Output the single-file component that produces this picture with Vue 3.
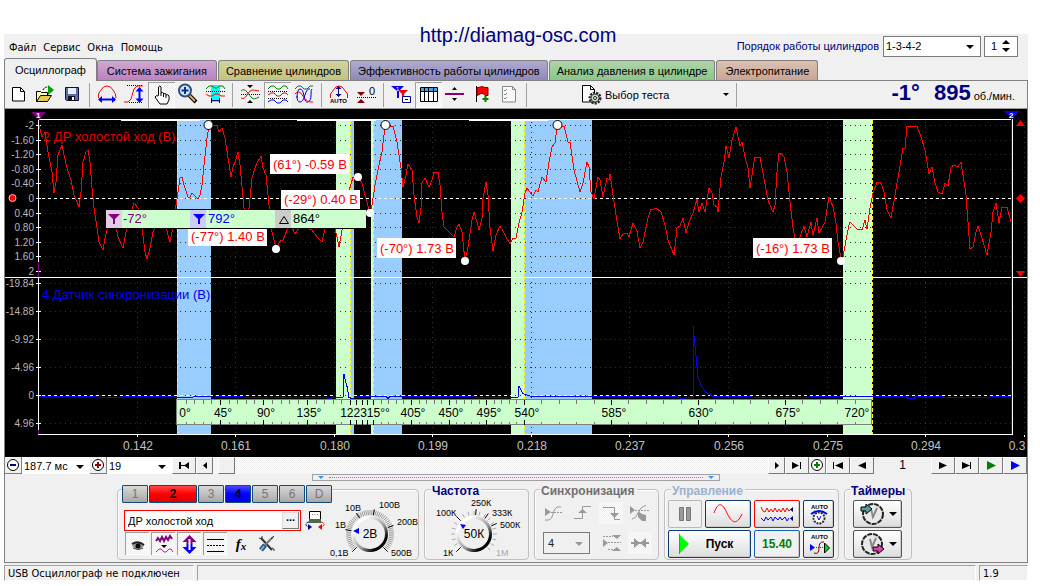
<script setup>
import { ref } from 'vue'

const tabs = [
  { label: 'Осциллограф', tone: 'active' },
  { label: 'Система зажигания', tone: 'violet' },
  { label: 'Сравнение цилиндров', tone: 'olive' },
  { label: 'Эффективность работы цилиндров', tone: 'lavender' },
  { label: 'Анализ давления в цилиндре', tone: 'green' },
  { label: 'Электропитание', tone: 'tan' },
]

/* Toolbar glyphs, drawn on a 27x26 grid */
const tools = [
  [
    { name: 'Новый', svg: '<path d="M7.5 5.500h8l4 4v9.500h-12z" fill="#fff" stroke="#000"/><path d="M15.500 5.500v4h4" fill="none" stroke="#000"/>' },
    { name: 'Открыть', svg: '<path d="M4.500 19.500v-10h4l1 1h6v3" fill="#ffffb0" stroke="#000"/><path d="M4.500 19.500l4-6h11l-4 6z" fill="#e8c850" stroke="#000"/><path d="M16 3l6 5-6 5z" fill="#00a000"/><path d="M11 8q1-3 5-3" stroke="#000" fill="none" stroke-dasharray="2 1"/>' },
    { name: 'Сохранить', svg: '<path d="M6.500 5.500h13v13h-12l-1-1z" fill="#5a6ea8" stroke="#101030"/><path d="M9 6h8v6H9z" fill="#e8eef8"/><path d="M9 14h7v5H9z" fill="#101020"/><path d="M13 15h2v3h-2z" fill="#fff"/>' },
  ],
  [
    { name: 'Период', svg: '<path d="M4.500 16v-4Q6 9 7 8q2-4 6-4 4 0 6 4 3 3 3 8" fill="none" stroke="#f00"/><path d="M5 17.500h16" stroke="#00f" stroke-width="2"/><path d="M4 17.500l4-3.500v7zM22 17.500l-4-3.500v7z" fill="#00f"/>' },
    { name: 'Амплитуда', svg: '<path d="M6 3.500h16M8 20.500h13" stroke="#000" stroke-dasharray="1 1"/><path d="M3 20h4l3-3 3-10 3-3h6" fill="none" stroke="#f00"/><path d="M18.500 8v10" stroke="#00f" stroke-width="2"/><path d="M18.500 5l-4 4.500h8zM18.500 21l-4-4.500h8z" fill="#00f"/>' },
    { name: 'Рука', on: true, svg: '<path d="M10.500 13V5q1.500-2 2.500 0v6q1.500-1 2.500 0v1q1.500-1 2.500 0v1q2-1 3 1v4l-2 4h-7l-5-7q1-2 3-1z" fill="#fff" stroke="#000"/><path d="M13 11v3M15.500 12v3M18 13v3" stroke="#000"/>' },
    { name: 'Лупа', svg: '<path d="M14 13l7 7" stroke="#000" stroke-width="4"/><path d="M14 13l6 6" stroke="#e0b060" stroke-width="2"/><circle cx="10" cy="8.500" r="6" fill="#d8eaff" stroke="#334c80" stroke-width="2"/><path d="M6.500 8.500h7M10 5v7" stroke="#003090" stroke-width="2"/>' },
    { name: 'Выделить', svg: '<path d="M9 3h9v17H9z" fill="#0ff"/><path d="M4 7l3-3h3l3 2h2l3-2h3l2 3" fill="none" stroke="#008000"/><path d="M4 9.500h19" stroke="#000" stroke-dasharray="1 1"/><path d="M4 12l3 2h3l3-2h3l3 2h4" fill="none" stroke="#f00"/><path d="M10 18.500h7M9.500 16v5M17.500 16v5" stroke="#000080"/>' },
  ],
  [
    { name: 'Центр', svg: '<path d="M4 12.500h19" stroke="#000" stroke-dasharray="1 1"/><path d="M4 9q3-3 6 1t5 6 7-1" fill="none" stroke="#008000"/><path d="M4 16q3 2 6-3t5-5 7 1" fill="none" stroke="#f00"/><path d="M10 3h6l-3 3zM10 21h6l-3-3z"/>' },
    { name: 'Раздельно', on: true, svg: '<path d="M4 7l3-3h3l3 3h3l3-3h3l2 3" fill="none" stroke="#008000"/><path d="M4 9.500h20M4 16.500h20" stroke="#000" stroke-dasharray="1 1"/><path d="M4 13l3-2h3l3 3h3l3-3h3l2 2" fill="none" stroke="#f00"/><path d="M4 20l3-2h3l3 3h3l3-3h3l2 2" fill="none" stroke="#00f"/>' },
    { name: 'Вместе', svg: '<path d="M4 7l3-3h3l3 3h3l3-3h3" fill="none" stroke="#008000"/><path d="M6 16q0-9 3-9t4 7 4 6 3-7 1-6" fill="none" stroke="#00f"/><path d="M4 12q4-5 8 2t10 6" fill="none" stroke="#f00"/><path d="M6 14q0 6 3 6t5-7 5-6" fill="none" stroke="#00f"/>' },
  ],
  [
    { name: 'Авто', svg: '<path d="M4.500 16v-4l3-4q2-4 5.500-4t5.500 4l3 4v4" fill="none" stroke="#f00"/><path d="M12.500 6v8" stroke="#000080"/><path d="M12.500 4l-3 3h6zM12.500 15l-3-3h6z" fill="#000080"/><text x="4" y="21" font-size="6" font-weight="bold">AUTO</text>' },
    { name: 'Ноль', svg: '<path d="M4 10h8l-4 4zM4 21h8l-4-4z" fill="#800000"/><path d="M4 15.500h19" stroke="#000" stroke-dasharray="1 1"/><text x="16" y="13" font-size="11">0</text>' },
  ],
  [
    { name: 'Маркеры', svg: '<path d="M3 4h13l-5 5v7H9V9z" fill="#00f"/><path d="M10 8h10l-4 4v6h-2v-6z" fill="#f00"/><path d="M14.500 14.500h8v6h-8z" fill="#fff" stroke="#000080"/><path d="M17 17.500h3" stroke="#000080"/><text x="8" y="9" font-size="6" fill="#fff">1</text>' },
    { name: 'Таблица', on: true, svg: '<path d="M5.500 5.500h17v14h-17z" fill="#fff" stroke="#000"/><path d="M6 6h16v3H6z" fill="#4aa0e8"/><path d="M6 9.500h17M9.500 6v14M13.500 6v14M18.500 6v14" stroke="#000"/>' },
    { name: 'Линия', svg: '<path d="M3 11h19v2H3z" fill="#800080"/><path d="M10 8h5l-2.500-3zM10 16h5l-2.500 3z"/>' },
    { name: 'Флаг', svg: '<path d="M7.500 4v16" stroke="#000"/><path d="M8 5.500h2l3-1 3 1h3v8h-3l-2-2h-2l-4 2z" fill="#f00" stroke="#800000"/><path d="M16.500 14v6M13.500 17h6" stroke="#008000" stroke-width="2"/>' },
    { name: 'Отчёт', svg: '<path d="M6.500 4.500h10l3 3v12.500h-13z" fill="#f8f8f8" stroke="#888"/><path d="M16.500 4.500v3h3M8 8l1 1 2-2M8 12l1 1 2-2M8 16l1 1 2-2" fill="none" stroke="#888"/>' },
  ],
]

const trace = `39,125 42,137 45,132 48,152 52,172 54,193 56,182 58,155 62,145 64,155 67,168 71,180 74,195 77,202 79,207 81,192 83,162 86,152 88,150 90,162 92,188 94,208 97,228 99,242 103,250 105,238 110,218 115,222 118,237 123,248 126,232 130,215 134,203 138,208 142,228 145,252 147,259 150,248 153,232 160,220 165,222 168,235 170,242 172,232 175,212 178,192 180,178 182,177 184,185 188,197 190,197 192,193 195,196 198,199 200,195 202,185 204,165 207,138 209,127 217,125 219,132 222,128 225,138 228,158 231,177 233,167 235,162 238,152 240,165 244,208 247,215 249,208 252,178 255,168 257,163 261,156 263,168 266,175 269,205 272,232 276,248 281,240 283,240 287,230 291,225 295,234 299,228 306,228 312,230 317,237 322,242 325,228 333,218 339,247 342,230 347,198 353,177 358,177 362,183 365,195 370,213 372,205 375,185 379,165 382,152 385,126 393,126 397,142 401,168 403,187 406,175 408,164 412,170 414,195 417,217 419,223 421,208 422,183 425,178 429,187 432,180 434,172 438,172 440,185 442,212 444,227 450,233 454,237 457,227 459,224 462,232 465,261 468,247 472,220 474,212 477,222 479,230 482,218 483,198 486,182 488,195 490,228 493,251 496,235 500,226 503,231 506,237 510,244 513,238 516,238 519,223 522,212 525,193 527,188 533,196 536,190 538,192 542,177 546,182 549,162 552,147 555,143 557,127 564,126 568,142 570,142 574,170 580,192 583,183 587,162 589,167 591,192 594,199 598,177 600,180 603,197 607,178 609,180 610,174 613,195 616,215 620,239 623,234 627,233 629,237 633,223 637,231 640,248 643,242 648,218 651,209 654,209 656,208 661,212 665,225 668,240 674,255 677,228 680,226 683,218 686,233 689,222 693,213 697,199 699,212 702,203 705,212 709,188 712,193 714,205 717,207 718,212 721,177 724,162 726,146 729,158 732,140 736,127 740,146 742,142 745,157 748,168 750,188 753,168 755,157 757,158 760,157 762,168 768,200 773,212 775,205 777,172 779,153 781,153 784,157 787,172 790,202 793,228 795,238 798,242 804,226 807,237 811,222 813,235 817,218 819,233 822,228 825,222 829,197 833,207 836,223 838,242 841,258 843,257 846,240 849,225 850,222 857,229 862,230 865,220 867,229 870,208 873,193 877,182 881,183 884,192 887,210 891,218 895,195 899,172 903,148 905,148 907,126 917,126 921,137 925,150 929,174 932,167 935,183 938,192 942,194 945,183 948,186 951,167 954,165 958,167 961,162 963,175 966,195 968,222 970,249 973,247 976,232 978,226 982,238 987,255 991,232 993,212 996,203 999,223 1002,207 1007,207 1011,222`
const sync = `39,396 95,396 100,397 120,397 125,396 172,396 176,397 210,396 213,398 217,396 270,397 325,397 330,398 334,397 343,397 344,374 347,386 349,397 352,398 360,396 386,396 388,398 390,396 430,396 518,397 519,386 523,393 531,396 620,396 676,396 680,398 693,397 693,325 694,335 696,355 698,377 701,385 706,392 713,396 790,397 830,396 906,396 908,398 914,398 916,396 970,397 1011,396`

const bands = [
  [177, 34, 'blue'], [336, 14, 'green'], [350, 4, 'blue'], [371, 2, 'green'], [373, 29, 'blue'],
  [511, 13, 'green'], [524, 68, 'blue'], [843, 29, 'green'],
]
const tdcLines = [177, 350, 373, 524, 872]
const upper = [['-2', 125], ['-1.60', 140], ['-1.20', 154], ['-0.80', 169], ['-0.40', 183], ['0', 198], ['0.40', 213], ['0.80', 227], ['1.20', 242], ['1.60', 256], ['2', 271]]
const lower = [['-19.84', 283], ['-14.88', 311], ['-9.92', 339], ['-4.96', 367], ['0', 395], ['4.96', 423]]
const times = [['0.142', 137], ['0.161', 235], ['0.180', 334], ['0.199', 432], ['0.218', 531], ['0.237', 629], ['0.256', 728], ['0.275', 827], ['0.294', 925]]
const callouts = [
  ['(61°) -0.59 В', 270, 154, 20], ['(-29°) 0.40 В', 281, 190, 19], ['(-77°) 1.40 В', 188, 228, 18],
  ['(-70°) 1.73 В', 377, 238, 20], ['(-16°) 1.73 В', 753, 238, 20],
]
const peaks = [[208, 125], [385, 125], [557, 125]]
const points = [[276, 249], [358, 177], [370, 213], [465, 261], [841, 261]]
const degrees = [['0°', 185], ['45°', 223], ['90°', 266], ['135°', 309], ['405°', 413], ['450°', 451], ['495°', 489], ['540°', 527], ['585°', 614], ['630°', 701], ['675°', 788], ['720°', 857]]
const major = [177, 220, 263, 307, 350, 356, 362, 367, 373, 411, 449, 486, 524, 611, 698, 785, 872]
const minor = major.slice(0, -1).flatMap((x, i) => {
  const step = (major[i + 1] - x) / 5
  return step < 3 ? [] : [1, 2, 3, 4].map((n) => Math.round(x + step * n))
})

/* Dial scales run from 7:30 to 4:30 */
function dialTicks(count) {
  return Array.from({ length: count }, (_, i) => {
    const a = ((135 + (270 * i) / (count - 1)) * Math.PI) / 180
    return [Math.cos(a), Math.sin(a)]
  })
}
const dials = {
  volt: {
    value: '2В', ticks: dialTicks(55), long: [135, 190, 237, 280, 340, 45].map(toVec),
    labels: [['0,1В', 0, 60], ['1В', 5, 32], ['10В', 15, 15], ['100В', 49, 12], ['200В', 67, 29], ['500В', 61, 60]],
  },
  freq: {
    value: '50К', ticks: dialTicks(19), long: [135, 225, 275, 305, 335].map(toVec),
    labels: [['1К', 7, 60], ['100К', 0, 20], ['250К', 35, 10], ['333К', 56, 20], ['500К', 64, 32], ['1М', 60, 60]],
  },
}
function toVec(deg) {
  return [Math.cos((deg * Math.PI) / 180), Math.sin((deg * Math.PI) / 180)]
}

const channels = ['1', '2', '3', '4', '5', '6', 'D']
const channelName = ref('ДР холостой ход')
const position = ref(5)
const cylinder = ref('1')
</script>

<template>
  <div class="screen">
    <a class="site" href="#">http://diamag-osc.com</a>
    <div class="window">
      <header class="menubar">
        <nav class="menu">
          <button>Файл</button><button>Сервис</button><button>Окна</button><button>Помощь</button>
        </nav>
        <div class="order">
          <label for="order">Порядок работы цилиндров</label>
          <span class="combo framed order-box"><select id="order"><option>1-3-4-2</option></select></span>
          <span class="spin">
            <input v-model="cylinder" type="text" aria-label="Цилиндр" />
            <svg width="10" height="14" viewBox="0 0 10 14"><path d="M1 5h8L5 1zM1 9h8l-4 4z" /></svg>
          </span>
        </div>
      </header>

      <div class="tabs" role="tablist">
        <button v-for="t in tabs" :key="t.label" role="tab" :class="['tab', t.tone]">{{ t.label }}</button>
      </div>

      <div class="page">
        <div class="toolbar">
          <div v-for="(group, g) in tools" :key="g" class="tool-group">
            <button v-for="t in group" :key="t.name" :class="['tool', { on: t.on }]" :aria-label="t.name">
              <svg width="27" height="26" viewBox="0 0 27 26" v-html="t.svg" />
            </button>
          </div>
          <button class="test">
            <svg width="22" height="22" viewBox="0 0 22 22">
              <path d="M1.500 1.500h8l4 4v12.500h-12z" fill="#fff" stroke="#000" /><path d="M9.500 1.500v4h4" fill="none" stroke="#000" />
              <circle cx="14" cy="14" r="5" fill="none" stroke="#222" stroke-width="3" stroke-dasharray="2 1" />
              <circle cx="14" cy="14" r="4" fill="#c8dcc8" stroke="#444" /><circle cx="14" cy="14" r="1.500" fill="#fff" stroke="#222" />
            </svg>
            <span>Выбор теста</span>
            <i class="caret small" />
          </button>
          <div class="rpm"><b>-1°</b><b>895</b><span>об./мин.</span></div>
        </div>

        <svg class="plot" viewBox="5 109 1022 348" role="img" aria-label="Осциллограмма">
          <rect x="5" y="109" width="1022" height="348" />
          <g shape-rendering="crispEdges">
            <rect v-for="b in bands" :key="b[0]" :x="b[0]" y="120" :width="b[1]" height="314" :class="'band-' + b[2]" />
            <g class="grid">
              <path v-for="r in upper" :key="'u' + r[1]" :d="`M40 ${r[1]}.5H1012`" />
              <path v-for="r in lower" :key="'l' + r[1]" :d="`M40 ${r[1]}.5H1012`" />
              <path v-for="t in times" :key="t[1]" :d="`M${t[1]}.5 122V434`" />
              <path d="M1024.500 122V434" />
            </g>
            <path class="zero" d="M42 198.500H1012M42 395.500H1012" />
            <path v-for="x in tdcLines" :key="x" class="tdc" :d="`M${x}.5 120V434`" />
            <path class="axis" d="M38 119.500H1013M38.500 120V434M5 277.500H1027M38 434.500H1013M1012.500 120V434" />
            <path class="axis" d="M121 120.500h79M297 120.500h79M469 120.500h79" />
            <path class="axis" :d="upper.map((r) => `M36 ${r[1]}.5h5`).join('') + lower.map((r) => `M36 ${r[1]}.5h5`).join('')" />
            <path class="time-tick" :d="times.map((t) => `M${t[1]}.5 435v2`).join('') + 'M1024.500 435v2'" />
            <path d="M38.500 112v8M38.500 262v15M38.500 430v4" stroke="#800080" />
            <path d="M1011.500 119V434" stroke="#00f" />
          </g>
          <g class="scale">
            <text v-for="r in upper" :key="'u' + r[1]" x="34" :y="r[1] + 4">{{ r[0] }}</text>
            <text v-for="r in lower" :key="'l' + r[1]" x="34" :y="r[1] + 4">{{ r[0] }}</text>
          </g>
          <g class="times">
            <text v-for="t in times" :key="t[1]" :x="t[1] + 1" y="450">{{ t[0] }}</text>
            <text x="1017" y="450">0.3</text>
          </g>
          <text class="title" x="43" y="141" fill="#e00000">2 ДР холостой ход (В)</text>
          <text class="title" x="42" y="299" fill="#0000e8">4 Датчик синхронизации (В)</text>
          <polyline :points="trace" class="trace" stroke="#f00" />
          <polyline :points="sync" class="trace" stroke="#00f" transform="translate(0 .5)" />

          <g shape-rendering="crispEdges">
            <rect x="176.500" y="399.500" width="695" height="25" class="ruler" />
            <path stroke="#777" :d="minor.map((x) => `M${x}.5 400v4M${x}.5 422v2`).join('')" />
            <path stroke="#000" :d="major.slice(1, -1).map((x) => `M${x}.5 400v5M${x}.5 420v5`).join('')" />
          </g>
          <g class="degrees">
            <text v-for="d in degrees" :key="d[0]" :x="d[1]" y="417">{{ d[0] }}</text>
            <text x="365" y="417">122315°°</text>
          </g>

          <g v-for="c in callouts" :key="c[0]" class="callout">
            <rect :x="c[1]" :y="c[2]" width="79" :height="c[3]" />
            <text :x="c[1] + 3" :y="c[2] + c[3] - 5">{{ c[0] }}</text>
          </g>
          <g class="readout">
            <rect x="105" y="209" width="262" height="20" fill="#000" />
            <rect x="106" y="210" width="260" height="18" fill="#cfc" />
            <rect x="106" y="210" width="16" height="18" fill="#e4cce4" />
            <rect x="190" y="210" width="16" height="18" fill="#ccf" />
            <rect x="275" y="210" width="16" height="18" fill="#ccc" />
            <path d="M108 214h12l-5 5v5h-2v-5z" fill="#800080" /><path d="M193 214h12l-5 5v5h-2v-5z" fill="#00f" />
            <path d="M279.500 223.500h9l-4.500-7z" fill="none" stroke="#000" />
            <text x="123" y="223" fill="#800080">-72°</text>
            <text x="208" y="223" fill="#00f">792°</text>
            <text x="293" y="223">864°</text>
          </g>
          <circle v-for="p in peaks" :key="p[0]" :cx="p[0] + .5" :cy="p[1]" r="4.500" fill="#fff" stroke="#000" />
          <circle v-for="p in points" :key="p[0]" :cx="p[0]" :cy="p[1]" r="4" fill="#fff" />
          <circle cx="12.500" cy="198" r="3.500" fill="#f00" stroke="#fbb" />
          <path d="M31 112h15l-7 8z" fill="#800080" /><path d="M1004 111h15l-7 8z" fill="#00f" />
          <text class="flag" x="36" y="118">1</text><text class="flag" x="1009" y="118">2</text>
          <path d="M1016 126h9l-4.500-6zM1016 271h9l-4.500 6zM1016 198.500l4.500-4.500 4.500 4.500-4.500 4.500z" fill="#f00" />
        </svg>

        <div class="scrollrow">
          <button class="flat" aria-label="Уменьшить"><svg width="17" height="17" viewBox="0 0 17 17"><circle cx="8" cy="8" r="5.500" fill="#fff" stroke="#000" /><path d="M5 8h6" stroke="#000080" stroke-width="2" /></svg></button>
          <span class="combo w68"><select aria-label="Длительность"><option>187.7 мс</option></select></span>
          <button class="flat" aria-label="Увеличить"><svg width="17" height="17" viewBox="0 0 17 17"><circle cx="8" cy="8" r="5.500" fill="#fff" stroke="#000" /><path d="M5 8h6M8 5v6" stroke="#900000" stroke-width="2" /></svg></button>
          <span class="combo w64"><select aria-label="Масштаб"><option>19</option></select></span>
          <button class="raised w24" aria-label="В начало"><svg width="12" height="9" viewBox="0 0 12 9"><path d="M1 1h2v7H1zM11 1v7L6 4.500zM3 4h4v1H3z" /></svg></button>
          <button class="raised w17" aria-label="Влево"><svg width="6" height="9" viewBox="0 0 6 9"><path d="M5 1v7L1 4.500z" /></svg></button>
          <input v-model="position" class="track" type="range" min="0" max="556" aria-label="Позиция" />
          <button class="raised w17" aria-label="Вправо"><svg width="6" height="9" viewBox="0 0 6 9"><path d="M1 1v7l4-3.500z" /></svg></button>
          <button class="raised w24" aria-label="В конец"><svg width="12" height="9" viewBox="0 0 12 9"><path d="M9 1h1v7H9zM1 1v7l7-3.500z" /></svg></button>
          <button class="flat" aria-label="Добавить"><svg width="17" height="17" viewBox="0 0 17 17"><circle cx="8" cy="8" r="5.500" fill="#fff" stroke="#000" /><path d="M5 8h6M8 5v6" stroke="#008000" stroke-width="2" /></svg></button>
          <button class="raised w24" aria-label="Первый кадр"><svg width="12" height="9" viewBox="0 0 12 9"><path d="M1 1h1v7H1zM11 1v7L3 4.500z" /></svg></button>
          <button class="raised w24" aria-label="Предыдущий кадр"><svg width="10" height="9" viewBox="0 0 10 9"><path d="M9 1v7L1 4.500z" /></svg></button>
          <output class="frame">1</output>
          <button class="raised w24" aria-label="Следующий кадр"><svg width="10" height="9" viewBox="0 0 10 9"><path d="M1 1v7l8-3.500z" /></svg></button>
          <button class="raised w24" aria-label="Последний кадр"><svg width="12" height="9" viewBox="0 0 12 9"><path d="M9 1h1v7H9zM1 1v7l8-3.500z" /></svg></button>
          <button class="raised w24" aria-label="Пуск вперёд"><svg width="10" height="9" viewBox="0 0 10 9"><path d="M1 0v9l9-4.500z" fill="#008000" /></svg></button>
          <button class="raised w24" aria-label="Пуск с записью"><svg width="10" height="9" viewBox="0 0 10 9"><path d="M1 0v9l9-4.500z" fill="#00f" /></svg></button>
        </div>

        <div class="splitter"><div class="grip"><i /><span /><i /></div></div>

        <div class="panel">
          <section class="box channel">
            <div class="channel-left">
              <div class="channels">
                <button v-for="c in channels" :key="c" :class="['ch', 'ch' + c]">{{ c }}</button>
              </div>
              <div class="name-row">
                <div class="name">
                  <input v-model="channelName" type="text" aria-label="Название канала" />
                  <button aria-label="Выбрать">...</button>
                </div>
                <svg width="20" height="20" viewBox="0 0 20 20"><path d="M4.500 1.500h11v9h-11z" fill="#fff" stroke="#000" /><path d="M4 9h12v4H4z" fill="#4a6a4a" /><path d="M7 5l1-1M10 4v1M13 5l-1-1" stroke="#888" /><path d="M4 12q-4 1-3 3t4 2" fill="none" stroke-dasharray="3 1" stroke="#000080" /><path d="M16 12q4 1 3 3t-4 2" fill="none" stroke-dasharray="3 1" stroke="#f00" /><path d="M3 14l4 3-4 3z" fill="#000080" /><path d="M17 14l-4 3 4 3z" fill="#f00" /></svg>
              </div>
              <div class="view-row">
                <button class="view on" aria-label="Показать"><svg width="23" height="22" viewBox="0 0 23 22"><path d="M6 12q3-4 8-3l4 3-2 4q-6 3-9-2z" fill="#999" /><path d="M6 11q6-4 12 1" fill="none" stroke="#222" stroke-width="2" /><circle cx="12" cy="13" r="2.500" /><path d="M7 15q5 3 10 0" stroke="#555" fill="none" /></svg></button>
                <button class="view on" aria-label="Фильтр"><svg width="23" height="22" viewBox="0 0 23 22"><path d="M4 8l2-3 2 3 2-4 2 4 2-4 2 3 2-4 2 3" fill="none" stroke="#800080" stroke-width="2" /><path d="M9 12h6l-3 3z" /><path d="M4 19l3-3h2l3 3h2l3-3h2l2 3" fill="none" stroke="#c020a0" /></svg></button>
                <button class="view on" aria-label="Сдвиг"><svg width="23" height="22" viewBox="0 0 23 22"><path d="M11.500 2l7 7h-4v2H8.500V9h-4z" fill="#800080" /><path d="M11.500 21l7-7h-4v-3H8.500v3h-4z" fill="#00f" /><path d="M11.500 6v11" stroke="#fff" stroke-width="2" /></svg></button>
                <button class="view on" aria-label="Уровни"><svg width="23" height="22" viewBox="0 0 23 22"><path d="M3 6.500h17M3 18.500h17" stroke="#000" /><path d="M3 12.500h17" stroke="#000" stroke-dasharray="2 1" /></svg></button>
                <button class="view fx">f<small>x</small></button>
                <button class="view" aria-label="Настройка"><svg width="20" height="20" viewBox="0 0 20 20"><path d="M4 4l11 12" stroke="#333" stroke-width="2" /><path d="M16 3L8 11" stroke="#777" stroke-width="2" /><path d="M2 4l3 1V2M17 17v-2l-2-1M14 5l3-3" fill="none" stroke="#333" /><path d="M8 11l-4 5" stroke="#26518c" stroke-width="5" /><path d="M7 12l-3 4" stroke="#78b0e0" stroke-width="2" /></svg></button>
              </div>
            </div>
            <svg class="dial" width="88" height="64" viewBox="0 0 88 64">
              <defs>
                <linearGradient id="rim" x1=".1" y1=".1" x2=".9" y2=".9"><stop offset=".15" stop-color="#fff" /><stop offset=".6" stop-color="#999" /><stop offset=".85" stop-color="#000" /></linearGradient>
              </defs>
              <path stroke="#999" :d="dials.volt.ticks.map((t) => `M${40 + t[0] * 19} ${38 + t[1] * 19}L${40 + t[0] * 24} ${38 + t[1] * 24}`).join('')" />
              <path stroke="#000" :d="dials.volt.long.map((t) => `M${40 + t[0] * 19} ${38 + t[1] * 19}L${40 + t[0] * 25} ${38 + t[1] * 25}`).join('')" />
              <circle cx="40" cy="38" r="18" fill="url(#rim)" /><circle cx="40" cy="38" r="15" fill="#efefef" />
              <path d="M23 35l6-3v6z" fill="#00f" />
              <text v-for="l in dials.volt.labels" :key="l[0]" :x="l[1]" :y="l[2]" class="dial-label">{{ l[0] }}</text>
              <text x="40" y="42" class="dial-value">{{ dials.volt.value }}</text>
            </svg>
          </section>

          <section class="box freq">
            <h2 class="navy">Частота</h2>
            <svg class="dial" width="88" height="64" viewBox="0 0 88 64">
              <path stroke="#aaa" :d="dials.freq.ticks.map((t) => `M${38 + t[0] * 19} ${38 + t[1] * 19}L${38 + t[0] * 23} ${38 + t[1] * 23}`).join('')" />
              <path stroke="#000" :d="dials.freq.long.map((t) => `M${38 + t[0] * 19} ${38 + t[1] * 19}L${38 + t[0] * 25} ${38 + t[1] * 25}`).join('')" />
              <circle cx="38" cy="38" r="18" fill="url(#rim)" /><circle cx="38" cy="38" r="15" fill="#efefef" />
              <path d="M24 28l6 1-3 4z" fill="#00f" />
              <text v-for="l in dials.freq.labels" :key="l[0]" :x="l[1]" :y="l[2]" :class="['dial-label', { dim: l[0] === '1М' }]">{{ l[0] }}</text>
              <text x="38" y="42" class="dial-value">{{ dials.freq.value }}</text>
            </svg>
          </section>

          <section class="box sync">
            <h2 class="gray">Синхронизация</h2>
            <div class="sync-row">
              <button disabled aria-label="По уровню"><svg width="24" height="22" viewBox="0 0 24 22"><path d="M3 6l6 4-6 4z" fill="#999" /><path d="M3 18h4q3-1 4-6t4-7h4" fill="none" stroke="#999" /><path d="M9 10.500h12" stroke="#999" stroke-dasharray="2 1" /></svg></button>
              <button disabled aria-label="По фронту"><svg width="24" height="22" viewBox="0 0 24 22"><path d="M3 16.500h8.500v-12H20" fill="none" stroke="#999" /><path d="M7 11h9l-4.500-4z" fill="#999" /></svg></button>
              <button disabled class="on" aria-label="По спаду"><svg width="24" height="22" viewBox="0 0 24 22"><path d="M4 5.500h11.500v12H21" fill="none" stroke="#999" /><path d="M11 11h9l-4.500 5z" fill="#999" /></svg></button>
              <button disabled aria-label="Вручную"><svg width="24" height="22" viewBox="0 0 24 22"><path d="M2 4l5 4-5 4z" fill="#999" /><path d="M4 17q4 0 6-6t8-8" fill="none" stroke="#999" /><path d="M7 8.500h15" stroke="#999" stroke-dasharray="2 1" /><path d="M10 9l4 3 4 1v6h-4l-4-4z" fill="#999" /></svg></button>
            </div>
            <div class="sync-row second">
              <span class="combo framed disabled"><select aria-label="Канал синхронизации" disabled><option>4</option></select></span>
              <button disabled aria-label="Пределы"><svg width="24" height="22" viewBox="0 0 24 22"><path d="M3 7l5 4-5 4zM12 3h9l-4 4zM12 19h9l-4-4z" fill="#999" /><path d="M3 4.500h10M8 10.500h13M8 17.500h6" stroke="#999" stroke-dasharray="2 1" /></svg></button>
              <button disabled class="on" aria-label="Сжать"><svg width="24" height="22" viewBox="0 0 24 22"><path d="M3 11h18" stroke="#999" stroke-width="2" /><path d="M6 6v10l6-5zM18 6v10l-6-5z" fill="#999" /></svg></button>
            </div>
          </section>

          <section class="box control">
            <h2 class="pale">Управление</h2>
            <div class="control-grid">
              <button class="push idle" disabled aria-label="Пауза"><svg width="14" height="16" viewBox="0 0 14 16"><path d="M1.500 1.500h4v13h-4zM8.500 1.500h4v13h-4z" fill="#999" stroke="#777" /></svg></button>
              <button class="push" aria-label="Синус"><svg width="30" height="20" viewBox="0 0 30 20"><path d="M1 9C5-2 9-2 14 9s10 12 15 1" fill="none" stroke="#f00" /></svg></button>
              <button class="push red" aria-label="Волны"><svg width="34" height="20" viewBox="0 0 34 20"><path d="M1 3l2 4 2 1 2-4 2 4 2-3 2 3 2-4 2 4 2-3 2 3 2-4 2 4 2-4 2 3 2-2" fill="none" stroke="#f00" /><path d="M1 14l3 3 2-4 2 3 3-3 2 4 2-4 3 3 2-3 2 3 3-3 2 4 2-3" fill="none" stroke="#00f" /><path d="M33 3v5l-3-2.500zM33 12v5l-3-2.500z" fill="#000080" /></svg></button>
              <button class="push" aria-label="Авто напряжение"><svg width="24" height="24" viewBox="0 0 24 24"><text x="4" y="7" class="auto">AUTO</text><path d="M4 12q8-6 16 0" fill="none" stroke="#00f" stroke-width="2" /><circle cx="12" cy="16" r="5.500" fill="#fff" stroke="#333" stroke-dasharray="2 1" stroke-width="2" /><path d="M10 14l2 4 2-4" fill="none" stroke="#00f" /></svg></button>
              <button class="push start"><svg width="10" height="20" viewBox="0 0 10 20"><path d="M0 0l10 10-10 10z" fill="#0f0" /><path d="M.5 0v20" stroke="#777" /></svg><span>Пуск</span></button>
              <button class="push blue time">15.40</button>
              <button class="push" aria-label="Авто запуск"><svg width="24" height="24" viewBox="0 0 24 24"><text x="4" y="7" class="auto">AUTO</text><path d="M7 21q5 2 5-5t5-6" fill="none" stroke="#800000" /><path d="M9 15.500h10" stroke="#444" stroke-dasharray="1 1" /><path d="M3 12l5 3.500L3 19z" fill="#00f" /><path d="M17.500 11v10l5-5z" fill="#0d0" stroke="#000" /></svg></button>
            </div>
          </section>

          <section class="box timers">
            <h2 class="navy">Таймеры</h2>
            <button class="push timer" aria-label="Таймер старта"><svg width="26" height="24" viewBox="0 0 26 24"><circle cx="14" cy="12" r="10" fill="#e8e8e8" stroke="#222" stroke-width="2" stroke-dasharray="5 1" /><path d="M12 7l2 8 4-9" fill="none" stroke="#888" stroke-width="2" /><path d="M2 5h5V2l6 5-6 5V9H2z" fill="#5a9c9c" stroke="#000" /></svg><i class="caret" /></button>
            <button class="push timer" aria-label="Таймер остановки"><svg width="26" height="24" viewBox="0 0 26 24"><circle cx="13" cy="12" r="10" fill="#e8e8e8" stroke="#222" stroke-width="2" stroke-dasharray="5 1" /><path d="M11 7l2 8 4-9" fill="none" stroke="#888" stroke-width="2" /><path d="M14 15h5v-3l6 5-6 5v-3h-5z" fill="#e040b0" stroke="#000" /></svg><i class="caret" /></button>
          </section>
        </div>
      </div>

      <footer class="status"><span class="s1">USB Осциллограф не подключен</span><span class="s2" /><span class="s3">1.9</span></footer>
    </div>
  </div>
</template>

<style>
body { background: #fff; }
</style>

<style scoped>
* { box-sizing: border-box; }
.screen { position: relative; padding: 34px 12px 0 4px; font: 11px/14px "Liberation Sans", Arial, sans-serif; color: #000; }
button, input, select { font: inherit; color: inherit; margin: 0; padding: 0; border: 0; border-radius: 0; background: none; outline: 0; }
button { display: flex; align-items: center; justify-content: center; }
svg { display: block; flex: none; }
.site { position: absolute; left: 0; right: 0; top: 23px; width: max-content; margin: 0 auto; padding-right: 4px; font-size: 20px; line-height: 24px; color: #000080; text-decoration: none; }
.window { background: #f0f0f0; }

.menubar { display: flex; justify-content: space-between; height: 24px; padding: 0 10px 0 5px; }
.menu { display: flex; align-items: center; gap: 7px; padding-top: 3px; font-family: "DejaVu Sans Condensed", "DejaVu Sans", sans-serif; }
.order { display: flex; align-items: center; gap: 3px; color: #000080; }
.order label { margin-right: 1px; }
.order-box { width: 98px; height: 21px; }
.spin { display: flex; align-items: center; width: 34px; height: 21px; padding: 0 6px; border: 1px solid #7a7a7a; background: #fff; color: #000; }
.spin input { width: 14px; min-width: 0; flex: 1; }

.combo { position: relative; display: block; background: #fff; color: #000; }
.combo select { appearance: none; width: 100%; height: 100%; padding-left: 2px; }
.combo::after { content: ""; position: absolute; right: 6px; top: 50%; margin-top: -1px; border: 4px solid transparent; border-top-color: #000; border-bottom: 0; pointer-events: none; }
.framed { border: 1px solid #7a7a7a; }
.caret { border: 4px solid transparent; border-top-color: #000; border-bottom: 0; }
.caret.small { border-left-width: 3px; border-right-width: 3px; border-top-width: 3px; }

.tabs { display: flex; align-items: flex-end; height: 23px; margin-bottom: -1px; gap: 1px; position: relative; }
.tab { height: 20px; min-width: 102px; padding: 0 7px; margin-bottom: 1px; border: 1px solid #808080; border-radius: 3px 3px 0 0; border-bottom: 0; }
.tab.active { height: 23px; min-width: 0; margin: 0 -1px 0 0; padding: 0 10px; background: #f0f0f0; }
.tab.violet { min-width: 120px; background: linear-gradient(#d0a8d2, #bb82bf); }
.olive { background: linear-gradient(#d2d2a2, #c3c37f); }
.lavender { background: linear-gradient(#b0aad0, #9089b8); }
.green { background: linear-gradient(#afd5a8, #8bc58b); }
.tan { background: linear-gradient(#d9c2b5, #c9a593); }

.page { border: 1px solid #808080; border-width: 1px 1px 0; }
.toolbar { display: flex; align-items: center; height: 28px; border-bottom: 1px solid #999; }
.tool-group { display: flex; padding-right: 3px; margin-right: 4px; border-right: 1px solid #a0a0a0; height: 24px; align-items: center; }
.tool-group:nth-child(5) { margin-right: 51px; }
.tool { width: 27px; height: 26px; }
.on { background: repeating-conic-gradient(#fff 0 25%, #eee 0 50%) 0 0 / 2px 2px; box-shadow: inset 1px 1px #a0a0a0, inset -1px -1px #fff; }
.test { width: 159px; height: 24px; justify-content: flex-start; gap: 2px; padding: 0 7px 0 3px; border-right: 1px solid #a0a0a0; }
.test span { flex: 1; text-align: left; }
.rpm { display: flex; align-items: baseline; margin-left: auto; padding-right: 12px; color: #000080; font-size: 22px; line-height: 24px; }
.rpm b + b { margin-left: 14px; }
.rpm span { margin-left: 3px; color: #000; font-size: 11px; }

.plot { width: 100%; height: auto; font-family: "Liberation Sans", Arial, sans-serif; }
.band-blue { fill: #9cf; }
.band-green { fill: #cfc; }
.grid path { stroke: #333310; stroke-dasharray: 1 4; }
.zero { stroke: #fff; stroke-dasharray: 3 3; }
.tdc { stroke: #ff0; stroke-dasharray: 4 2; }
.axis { stroke: #fff; }
.time-tick { stroke: #fff; }
.scale { font-size: 10px; fill: #b8b8b8; text-anchor: end; }
.times { font-size: 12px; fill: #c0c0c0; text-anchor: middle; }
.title { font-size: 13px; }
.trace { fill: none; shape-rendering: crispEdges; }
.ruler { fill: #cfc; stroke: #808080; }
.degrees { font-size: 12px; text-anchor: middle; }
.callout { font-size: 13px; fill: #f00; }
.callout rect { fill: #fff; }
.readout { font-size: 13px; }
.flag { font-size: 8px; font-weight: bold; fill: #fff; }

.scrollrow { display: flex; height: 17px; }
.flat { width: 17px; border-right: 1px solid #808080; border-bottom: 1px solid #808080; }
.raised { border: 1px solid #fff; border-right-color: #777; border-bottom-color: #777; background: #f0f0f0; }
.w17 { width: 17px; }
.w24 { width: 24px; }
.w68 { width: 68px; }
.w64 { width: 65px; }
.track { appearance: none; flex: 1; min-width: 0; height: 17px; background: repeating-conic-gradient(#fff 0 25%, #eee 0 50%) 0 0 / 2px 2px; }
.track::-webkit-slider-thumb { appearance: none; width: 17px; height: 17px; background: #f0f0f0; border: 1px solid #fff; border-right-color: #777; border-bottom-color: #777; }
.frame { width: 57px; text-align: center; line-height: 17px; font-size: 12px; }

.splitter { height: 8px; display: flex; justify-content: center; }
.grip { display: flex; align-items: center; gap: 5px; width: 40%; height: 7px; padding: 0 5px; border: 1px solid #a0a0a0; }
.grip span { flex: 1; border-top: 1px dotted #39f; }
.grip i { border: 3px solid transparent; border-top-color: #39f; border-bottom: 0; }

.panel { display: flex; gap: 5px; height: 80px; padding: 7px 0 2px 112px; }
.box { border: 1px solid #c0c0c0; border-radius: 4px; box-shadow: inset 1px 1px #fff; height: 71px; }
.box h2 { width: max-content; margin: -6px 0 0 5px; padding: 0 2px 0 1px; background: #f0f0f0; font-size: 12px; line-height: 14px; font-weight: bold; }
.navy { color: #000080; }
.gray { color: #707070; }
.pale { color: #9ab2d0; }
.channel { display: flex; width: 302px; padding-left: 4px; }
.channel-left { width: 210px; margin-top: -5px; }
.channels { display: flex; gap: 1px; }
.ch { width: 26px; height: 18px; border: 1px solid #134a7c; background: linear-gradient(#d8d8d8, #a8a8a8); color: #777; font-size: 12px; border-radius: 1px; }
.ch2 { width: 48px; background: linear-gradient(#ff4848, #f00 50%, #d00); color: #000; font-weight: bold; }
.ch4 { background: linear-gradient(#4a4aff, #00f 50%, #00d); color: #000; font-weight: bold; }
.name-row { display: flex; gap: 4px; margin: 7px 0 1px 2px; }
.name { display: flex; align-items: center; width: 177px; height: 21px; padding: 1px; border: 1px solid #f00; background: #fff; }
.name input { flex: 1; min-width: 0; padding-left: 2px; }
.name button { width: 17px; height: 17px; border: 1px solid #ddd; border-right-color: #777; border-bottom-color: #777; background: #f0f0f0; font-weight: bold; line-height: 8px; align-items: flex-start; }
.view-row { display: flex; gap: 2px; margin-left: 3px; }
.view { width: 24px; height: 23px; }
.fx { font: italic bold 15px/20px "Liberation Serif", serif; }
.fx small { font-size: 11px; padding-top: 4px; }
.dial-label { font-size: 9px; }
.dial-value { font-size: 12px; text-anchor: middle; }
.dim { fill: #aaa; }
.channel .dial { margin: 6px 0 0 -2px; }
.freq { width: 105px; padding-left: 1px; }
.freq .dial { margin: -2px 0 0 10px; }
.sync { width: 125px; padding: 0 4px; }
.sync h2, .control h2 { margin-left: 1px; }
.sync-row { display: flex; justify-content: space-between; margin: 4px 2px 0 3px; }
.sync-row button { width: 24px; height: 22px; }
.sync-row .on { box-shadow: none; }
.sync-row.second { margin: 8px 2px 0 4px; }
.sync-row .combo { width: 47px; height: 22px; background: #f0f0f0; margin-right: 6px; }
.sync-row select { color: #222; opacity: 1; padding-left: 4px; }
.disabled::after { border-top-color: #999; }
.control { width: 175px; padding: 0 3px; }
.control h2 { margin-left: 3px; }
.control-grid { display: grid; grid-template-columns: 34px 46px 46px 31px; gap: 3px; margin-top: 2px; }
.push { height: 28px; border: 1px solid #0c3c6c; border-radius: 2px; background: linear-gradient(#fff, #eee 50%, #ddd); box-shadow: inset -1px -1px #ccc; }
.control-grid { row-gap: 2px; }
.push.idle { border-color: #b8b8b8; background: #f0f0f0; box-shadow: none; }
.push.red { border-color: #f00; }
.push.blue { border-color: #1860b0; background: #f0f0f0; }
.auto { font-size: 6px; font-weight: bold; }
.start { grid-column: span 2; justify-content: flex-start; padding-left: 10px; font-size: 12px; font-weight: bold; }
.start span { flex: 1; }
.time { color: #008000; font-size: 12px; font-weight: bold; }
.timers { width: 68px; }
.timer { width: 49px; margin: 2px 0 0 8px; gap: 4px; border-color: #555; }

.status { display: flex; gap: 3px; height: 19px; padding-top: 2px; border-top: 1px solid #808080; font-family: "DejaVu Sans Condensed", "DejaVu Sans", sans-serif; line-height: 16px; }
.status span { border: 1px solid #a0a0a0; border-right-color: #fff; border-bottom-color: #fff; padding: 0 3px; white-space: nowrap; }
.s1 { width: 190px; }
.s2 { flex: 1; }
.s3 { width: 49px; }
</style>
